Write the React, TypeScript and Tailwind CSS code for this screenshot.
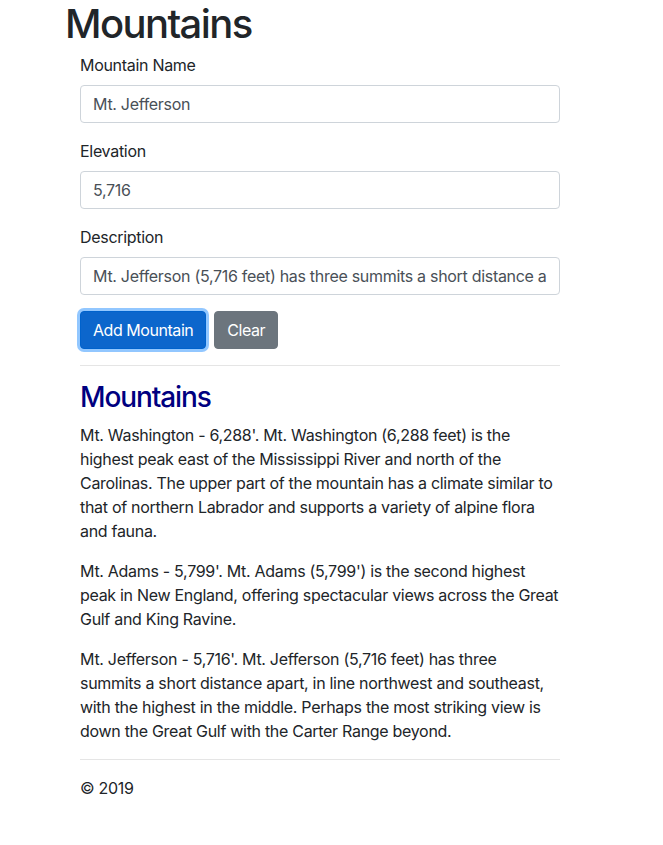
const mountains = [
  {
    name: "Mt. Washington",
    elevation: "6,288",
    description:
      "Mt. Washington (6,288 feet) is the highest peak east of the Mississippi River and north of the Carolinas. The upper part of the mountain has a climate similar to that of northern Labrador and supports a variety of alpine flora and fauna.",
  },
  {
    name: "Mt. Adams",
    elevation: "5,799",
    description:
      "Mt. Adams (5,799') is the second highest peak in New England, offering spectacular views across the Great Gulf and King Ravine.",
  },
  {
    name: "Mt. Jefferson",
    elevation: "5,716",
    description:
      "Mt. Jefferson (5,716 feet) has three summits a short distance apart, in line northwest and southeast, with the highest in the middle. Perhaps the most striking view is down the Great Gulf with the Carter Range beyond.",
  },
];

const inputCls =
  "block w-full h-[38px] px-3 py-1.5 text-base tracking-[-0.3px] text-[#495057] bg-white border border-[#ced4da] rounded outline-none";

function Field({ label, value }: { label: string; value: string }) {
  return (
    <div className="mb-4">
      <label className="block mb-2 leading-6">{label}</label>
      <input className={inputCls} defaultValue={value} />
    </div>
  );
}

export default function App() {
  return (
    <div
      className="min-h-screen bg-white text-[#212529] text-base leading-6 tracking-[-0.3px]"
      style={{ fontFamily: 'Inter, "Liberation Sans", Arial, sans-serif' }}
    >
      <div className="pl-[65px]">
        <h1 className="text-[40px] leading-[1.2] font-medium tracking-[-1.6px]">Mountains</h1>
      </div>
      <div className="ml-[80px] w-[480px]">
        <form className="mt-[5px]" onSubmit={(e) => e.preventDefault()}>
          <Field label="Mountain Name" value="Mt. Jefferson" />
          <Field label="Elevation" value="5,716" />
          <Field
            label="Description"
            value="Mt. Jefferson (5,716 feet) has three summits a short distance apart, in line northwest and southeast"
          />
          <div className="flex gap-2">
            <button
              type="submit"
              className="h-[38px] px-3 rounded text-white tracking-[-0.45px] bg-[#0c66cc] border border-[#0062cc] shadow-[0_0_0_3px_rgba(38,143,255,0.5)]"
            >
              Add Mountain
            </button>
            <button
              type="button"
              className="h-[38px] px-3 rounded text-white tracking-[-0.45px] bg-[#6c757d] border border-[#6c757d]"
            >
              Clear
            </button>
          </div>
        </form>
        <hr className="mt-4 mb-[15px] border-t border-[#e5e5e5]" />
        <h3 className="text-[28px] leading-[1.2] font-medium tracking-[-1.1px] text-[#000080] mb-2">
          Mountains
        </h3>
        {mountains.map((m) => (
          <p key={m.name} className="mb-4">
            {`${m.name} - ${m.elevation}'. ${m.description}`}
          </p>
        ))}
        <hr className="my-4 border-t border-[#e5e5e5]" />
        <footer>
          <p>© 2019</p>
        </footer>
      </div>
    </div>
  );
}
